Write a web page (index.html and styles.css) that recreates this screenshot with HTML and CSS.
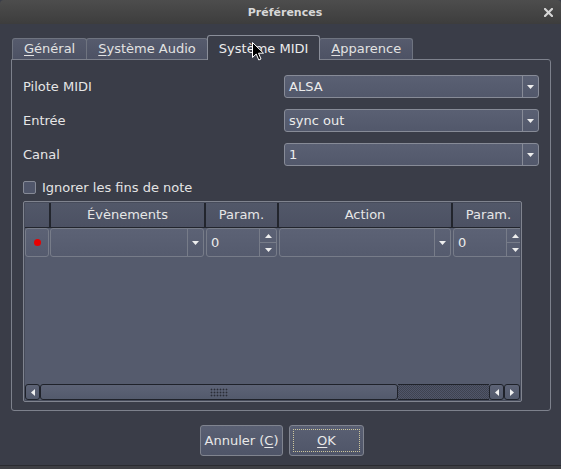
FILE: index.html
```html
<!DOCTYPE html>
<html lang="fr">
<head>
<meta charset="utf-8">
<title>Préférences</title>
<link rel="stylesheet" href="styles.css">
</head>
<body>
<div class="window">
  <div class="titlebar">
    <span></span>
    <span class="title">Préférences</span>
    <span class="close-wrap"><svg class="close" width="9" height="9" viewBox="0 0 9 9"><path d="M1 1L8 8M8 1L1 8" stroke="#d6d6d6" stroke-width="2.2" stroke-linecap="square"/></svg></span>
  </div>
  <div class="main">
    <div class="tabs">
      <div class="tab"><u>G</u>énéral</div>
      <div class="tab"><u>S</u>ystème Audio</div>
      <div class="tab active">Système MIDI</div>
      <div class="tab"><u>A</u>pparence</div>
    </div>
    <div class="pane">
      <div class="form">
        <span class="label">Pilote MIDI</span>
        <div class="combo"><span class="val">ALSA</span><span class="drop"><svg width="7" height="4" viewBox="0 0 7 4"><path d="M0 0H7L3.5 4Z" fill="#eeeeee"/></svg></span></div>
        <span class="label">Entrée</span>
        <div class="combo"><span class="val">sync out</span><span class="drop"><svg width="7" height="4" viewBox="0 0 7 4"><path d="M0 0H7L3.5 4Z" fill="#eeeeee"/></svg></span></div>
        <span class="label">Canal</span>
        <div class="combo"><span class="val">1</span><span class="drop"><svg width="7" height="4" viewBox="0 0 7 4"><path d="M0 0H7L3.5 4Z" fill="#eeeeee"/></svg></span></div>
      </div>
      <div class="check"><span class="box"></span><span>Ignorer les fins de note</span></div>
      <div class="table">
        <div class="thead">
          <div class="th c1"></div>
          <div class="th c2">Évènements</div>
          <div class="th c3">Param.</div>
          <div class="th c4">Action</div>
          <div class="th c5">Param.</div>
        </div>
        <div class="trow">
          <div class="cell r1"><span class="dot"></span></div>
          <div class="cell r2 combo-cell"><span class="val"></span><span class="drop"><svg width="7" height="4" viewBox="0 0 7 4"><path d="M0 0H7L3.5 4Z" fill="#eeeeee"/></svg></span></div>
          <div class="cell r3 spin"><span class="val">0</span><span class="arrows"><span class="up"><svg width="7" height="4" viewBox="0 0 7 4"><path d="M0 4H7L3.5 0Z" fill="#eeeeee"/></svg></span><span class="down"><svg width="7" height="4" viewBox="0 0 7 4"><path d="M0 0H7L3.5 4Z" fill="#eeeeee"/></svg></span></span></div>
          <div class="cell r4 combo-cell"><span class="val"></span><span class="drop"><svg width="7" height="4" viewBox="0 0 7 4"><path d="M0 0H7L3.5 4Z" fill="#eeeeee"/></svg></span></div>
          <div class="cell r5 spin"><span class="val">0</span><span class="arrows"><span class="up"><svg width="7" height="4" viewBox="0 0 7 4"><path d="M0 4H7L3.5 0Z" fill="#eeeeee"/></svg></span><span class="down"><svg width="7" height="4" viewBox="0 0 7 4"><path d="M0 0H7L3.5 4Z" fill="#eeeeee"/></svg></span></span></div>
        </div>
        <div class="tspace"></div>
        <div class="hscroll">
          <div class="sbtn w15"><svg width="4" height="7" viewBox="0 0 4 7"><path d="M4 0V7L0 3.5Z" fill="#f0f0f0"/></svg></div>
          <div class="thumb"><span class="grip"></span></div>
          <div class="track"></div>
          <div class="sbtn w15"><svg width="4" height="7" viewBox="0 0 4 7"><path d="M4 0V7L0 3.5Z" fill="#f0f0f0"/></svg></div>
          <div class="sbtn w16"><svg width="4" height="7" viewBox="0 0 4 7"><path d="M0 0V7L4 3.5Z" fill="#f0f0f0"/></svg></div>
        </div>
      </div>
    </div>
    <div class="buttons">
      <div class="btn cancel">Annuler (<u>C</u>)</div>
      <div class="btn ok"><span class="focus"><u>O</u>K</span></div>
    </div>
  </div>
  <div class="strip"></div>
  <svg class="cursor" width="13" height="20" viewBox="0 0 13 20"><path d="M0.5 0.5V15.5L4.2 12L6.8 18L9 17L6.5 11.2H11.5Z" fill="#000" stroke="#fff" stroke-width="1" stroke-linejoin="round"/></svg>
</div>
</body>
</html>
```
FILE: styles.css
```css
* { box-sizing: border-box; }
html, body { margin: 0; padding: 0; }
body {
  width: 561px;
  height: 469px;
  overflow: hidden;
  background: #3a3d48;
  font-family: "DejaVu Sans", "Noto Sans", sans-serif;
  font-size: 13px;
  color: #e4e4e4;
}
u { text-decoration: underline; text-underline-offset: 2px; text-decoration-thickness: 1px; }
.window {
  position: relative;
  display: flex;
  flex-direction: column;
  height: 469px;
  background: #3a3d48;
}
.titlebar {
  flex: none;
  height: 24px;
  display: grid;
  grid-template-columns: 1fr auto 1fr;
  align-items: center;
  background: linear-gradient(#4d4d4d, #3d3d3d);
  border-radius: 4px 4px 0 0;
}
.title { font-weight: bold; font-size: 11px; color: #d8d8d8; padding-top: 1px; padding-left: 9px; }
.close-wrap { justify-self: end; padding-right: 8px; display: flex; }
.main {
  flex: none;
  padding: 11px 10px 0 11px;
  display: flex;
  flex-direction: column;
}
.tabs {
  display: flex;
  align-items: flex-end;
  height: 25px;
  margin-left: 1px;
  margin-bottom: -1px;
  position: relative;
  z-index: 1;
}
.tab {
  height: 21px;
  margin-bottom: 1px;
  padding: 0 11px;
  line-height: 19px;
  border: 1px solid #6f7480;
  border-bottom: none;
  border-radius: 3px 3px 0 0;
  background: linear-gradient(#565b6d, #4d5264);
  color: #e2e2e2;
  white-space: nowrap;
}
.tab + .tab { margin-left: -1px; }
.tab.active {
  height: 25px;
  margin-bottom: 0;
  padding-top: 3px;
  background: #3a3d48;
  border-color: #8a8e99;
  position: relative;
  z-index: 2;
  color: #ececec;
}
.pane {
  width: 540px;
  height: 352px;
  border: 1px solid #7d818c;
  border-radius: 0 3px 3px 3px;
  padding: 15px 11px 8px 11px;
  display: flex;
  flex-direction: column;
}
.form {
  display: grid;
  grid-template-columns: 1fr 255px;
  row-gap: 11px;
  align-items: center;
}
.label { color: #e6e6e6; }
.combo {
  height: 23px;
  display: flex;
  border: 1px solid #878b97;
  border-radius: 3px;
  background: linear-gradient(#5a6073, #52586b);
}
.val { flex: 1; padding-left: 4px; line-height: 21px; color: #ececec; }
.drop {
  width: 16px;
  flex: none;
  border-left: 1px solid #878b97;
  display: flex;
  align-items: center;
  justify-content: center;
}
.check {
  display: flex;
  align-items: center;
  height: 13px;
  margin-top: 15px;
}
.box {
  width: 13px;
  height: 13px;
  border: 1px solid #868a96;
  border-radius: 2px;
  background: #50566a;
  margin-right: 6px;
}
.table {
  margin-top: 7px;
  width: 499px;
  height: 201px;
  border: 1px solid #80848f;
  border-radius: 2px;
  padding: 1px;
  background: #464b5a;
  display: flex;
  flex-direction: column;
}
.thead {
  flex: none;
  display: flex;
  height: 25px;
  background: linear-gradient(#525869, #4c5163);
  border-bottom: 1px solid #22252d;
  overflow: hidden;
}
.th {
  flex: none;
  text-align: center;
  line-height: 24px;
  border-right: 2px solid #22252d;
  color: #e6e6e6;
}
.c1 { width: 26px; }
.c2 { width: 155px; }
.c3 { width: 73px; }
.c4 { width: 174px; }
.c5 { width: 71px; border-right: none; }
.trow {
  flex: none;
  display: flex;
  height: 29px;
  background: #555b6d;
  overflow: hidden;
}
.cell {
  flex: none;
  height: 29px;
  display: flex;
  border: 1px solid #777c89;
  border-radius: 3px;
  background: linear-gradient(#5c6275, #555b6e);
}
.r1 { width: 24px; align-items: center; justify-content: center; }
.r2 { width: 154px; margin-left: 1px; }
.r3 { width: 71px; margin-left: 2px; }
.r4 { width: 172px; margin-left: 2px; }
.r5 { width: 71px; margin-left: 2px; }
.dot { width: 7px; height: 7px; border-radius: 50%; background: #e80000; }
.combo-cell .val, .spin .val { line-height: 27px; }
.combo-cell .drop { width: 16px; border-left: 1px solid #777c89; }
.arrows {
  width: 17px;
  flex: none;
  display: flex;
  flex-direction: column;
  border-left: 1px solid #777c89;
}
.arrows .up, .arrows .down {
  flex: 1;
  display: flex;
  align-items: center;
  justify-content: center;
}
.arrows .up { border-bottom: 1px solid #777c89; }
.tspace { flex: 1; background: #555b6d; }
.hscroll {
  flex: none;
  height: 16px;
  display: flex;
  background: #555b6d;
}
.sbtn, .thumb {
  height: 16px;
  border: 1px solid #1f222a;
  border-radius: 3px;
  background: linear-gradient(#5d6376, #535a6c);
  display: flex;
  align-items: center;
  justify-content: center;
  flex: none;
}
.w15 { width: 15px; }
.w16 { width: 16px; }
.thumb { width: 358px; }
.grip {
  width: 18px;
  height: 9px;
  background: radial-gradient(circle, #2a2d36 0.8px, transparent 1.1px) 0 0 / 3px 3px;
}
.track {
  flex: none;
  width: 91px;
  height: 16px;
  background: repeating-conic-gradient(#3f4350 0 25%, #50566a 0 50%) 0 0 / 2px 2px;
  border-top: 1px solid #1f222a;
  border-bottom: 1px solid #1f222a;
}
.buttons {
  display: flex;
  justify-content: center;
  gap: 6px;
  margin-top: 14px;
  padding-left: 2px;
}
.btn {
  height: 31px;
  border: 1px solid #80848f;
  border-radius: 3px;
  background: linear-gradient(#5a6073, #4f5568);
  color: #e8e8e8;
  display: flex;
  align-items: center;
  justify-content: center;
}
.cancel { width: 83px; }
.ok { width: 75px; padding: 3px; }
.focus {
  width: 100%;
  height: 100%;
  border: 1px dotted #cdc69b;
  display: flex;
  align-items: center;
  justify-content: center;
}
.strip {
  margin-top: auto;
  height: 4px;
  border-top: 1px solid #2a2b30;
  background: #3e3f44;
}
.cursor {
  position: absolute;
  left: 252px;
  top: 42px;
  z-index: 10;
}
```
